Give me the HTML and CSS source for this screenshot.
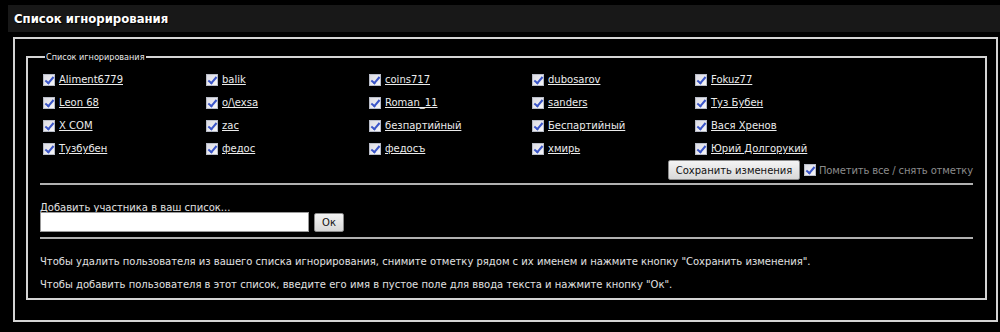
FILE: index.html
```html
<!DOCTYPE html>
<html lang="ru">
<head>
<meta charset="utf-8">
<title>Список игнорирования</title>
<link rel="stylesheet" href="styles.css">
</head>
<body>
<div class="header">Список игнорирования</div>
<div class="outer">
  <fieldset class="box">
    <legend>Список игнорирования</legend>
    <div class="grid">
      <label class="item"><input type="checkbox" checked><a href="#">Aliment6779</a></label>
      <label class="item"><input type="checkbox" checked><a href="#">balik</a></label>
      <label class="item"><input type="checkbox" checked><a href="#">coins717</a></label>
      <label class="item"><input type="checkbox" checked><a href="#">dubosarov</a></label>
      <label class="item"><input type="checkbox" checked><a href="#">Fokuz77</a></label>
      <label class="item"><input type="checkbox" checked><a href="#">Leon 68</a></label>
      <label class="item"><input type="checkbox" checked><a href="#">o/\exsa</a></label>
      <label class="item"><input type="checkbox" checked><a href="#">Roman_11</a></label>
      <label class="item"><input type="checkbox" checked><a href="#">sanders</a></label>
      <label class="item"><input type="checkbox" checked><a href="#">Туз Бубен</a></label>
      <label class="item"><input type="checkbox" checked><a href="#">X COM</a></label>
      <label class="item"><input type="checkbox" checked><a href="#">zac</a></label>
      <label class="item"><input type="checkbox" checked><a href="#">безпартийный</a></label>
      <label class="item"><input type="checkbox" checked><a href="#">Беспартийный</a></label>
      <label class="item"><input type="checkbox" checked><a href="#">Вася Хренов</a></label>
      <label class="item"><input type="checkbox" checked><a href="#">Тузбубен</a></label>
      <label class="item"><input type="checkbox" checked><a href="#">федос</a></label>
      <label class="item"><input type="checkbox" checked><a href="#">федосъ</a></label>
      <label class="item"><input type="checkbox" checked><a href="#">хмирь</a></label>
      <label class="item"><input type="checkbox" checked><a href="#">Юрий Долгорукий</a></label>
    </div>
    <div class="save-row">
      <button class="btn btn-save" type="button">Сохранить изменения</button>
      <label class="mark-all"><input type="checkbox" checked>Пометить все / снять отметку</label>
    </div>
    <hr class="sep">
    <div class="add">
      <div class="add-label">Добавить участника в ваш список...</div>
      <div class="add-row">
        <input class="add-input" type="text">
        <button class="btn btn-ok" type="button">Ок</button>
      </div>
    </div>
    <hr class="sep sep2">
    <p class="note">Чтобы удалить пользователя из вашего списка игнорирования, снимите отметку рядом с их именем и нажмите кнопку "Сохранить изменения".</p>
    <p class="note">Чтобы добавить пользователя в этот список, введите его имя в пустое поле для ввода текста и нажмите кнопку "Ок".</p>
  </fieldset>
</div>
</body>
</html>
```
FILE: styles.css
```css
html, body {
  margin: 0;
  padding: 0;
  background: #000;
}
body {
  padding: 5px 0 0 8px;
  font-family: "DejaVu Sans", Verdana, sans-serif;
  font-size: 10px;
  color: #e2e2e2;
}
.header {
  height: 27px;
  line-height: 28px;
  background: #181818;
  padding-left: 6px;
  font-family: "DejaVu Sans Condensed", "DejaVu Sans", sans-serif;
  font-size: 13px;
  font-weight: bold;
  color: #fff;
  text-shadow: 1px 1px 1px #000;
}
.outer {
  margin: 5px 2px 0 5px;
  border: 2px solid #d4d4d4;
  padding: 13px 9px 20px 11px;
}
.box {
  margin: 0;
  border: 2px solid #d4d4d4;
  padding: 6px 12px 7px 12px;
}
.box legend {
  font-family: "DejaVu Sans Condensed", "DejaVu Sans", sans-serif;
  font-size: 9px;
  color: #e8e8e8;
  padding: 0 1px;
  margin-left: 5px;
}
.grid {
  display: grid;
  grid-template-columns: repeat(5, 163px);
  grid-auto-rows: 23px;
}
.item {
  display: flex;
  align-items: center;
}
input[type="checkbox"] {
  appearance: none;
  -webkit-appearance: none;
  width: 12px;
  height: 12px;
  margin: 0 4px 0 3px;
  border: 1px solid #b8bcc8;
  background: linear-gradient(135deg, #dcdce4 0%, #f6f6f8 100%);
  position: relative;
  flex: none;
}
input[type="checkbox"]:checked::after {
  content: "";
  position: absolute;
  left: 3px;
  top: 0px;
  width: 3px;
  height: 7px;
  border: solid #3a55c8;
  border-width: 0 2px 2px 0;
  transform: rotate(40deg);
}
.item a {
  color: #ececec;
  text-decoration: underline;
}
.save-row {
  display: flex;
  justify-content: flex-end;
  align-items: center;
  height: 20px;
}
.btn {
  font-family: "DejaVu Sans", Verdana, sans-serif;
  font-size: 10px;
  color: #111;
  background: linear-gradient(#f4f4f4, #d8d8d8);
  border: 1px solid #8a8a8a;
  border-radius: 2px;
  padding: 0;
}
.btn-save {
  width: 132px;
  height: 20px;
}
.mark-all {
  display: flex;
  align-items: center;
  color: #8c8c8c;
  letter-spacing: -0.15px;
}
.mark-all input[type="checkbox"] {
  margin: 0 3px 0 4px;
}
.sep {
  border: 0;
  border-top: 2px solid #b0b0b0;
  margin: 3px 0 0 0;
  height: 0;
}
.add {
  padding-top: 18px;
}
.add-label {
  line-height: 10px;
}
.add-row {
  display: flex;
  align-items: center;
  gap: 5px;
  margin-top: -1px;
}
.add-input {
  width: 269px;
  height: 20px;
  box-sizing: border-box;
  border: 1px solid #999;
  background: #fff;
  margin: 0;
}
.btn-ok {
  width: 30px;
  height: 19px;
}
.sep2 {
  margin-top: 5px;
}
.note {
  margin: 17px 0 0 0;
  line-height: 12px;
}
.note + .note {
  margin-top: 11px;
}
```
